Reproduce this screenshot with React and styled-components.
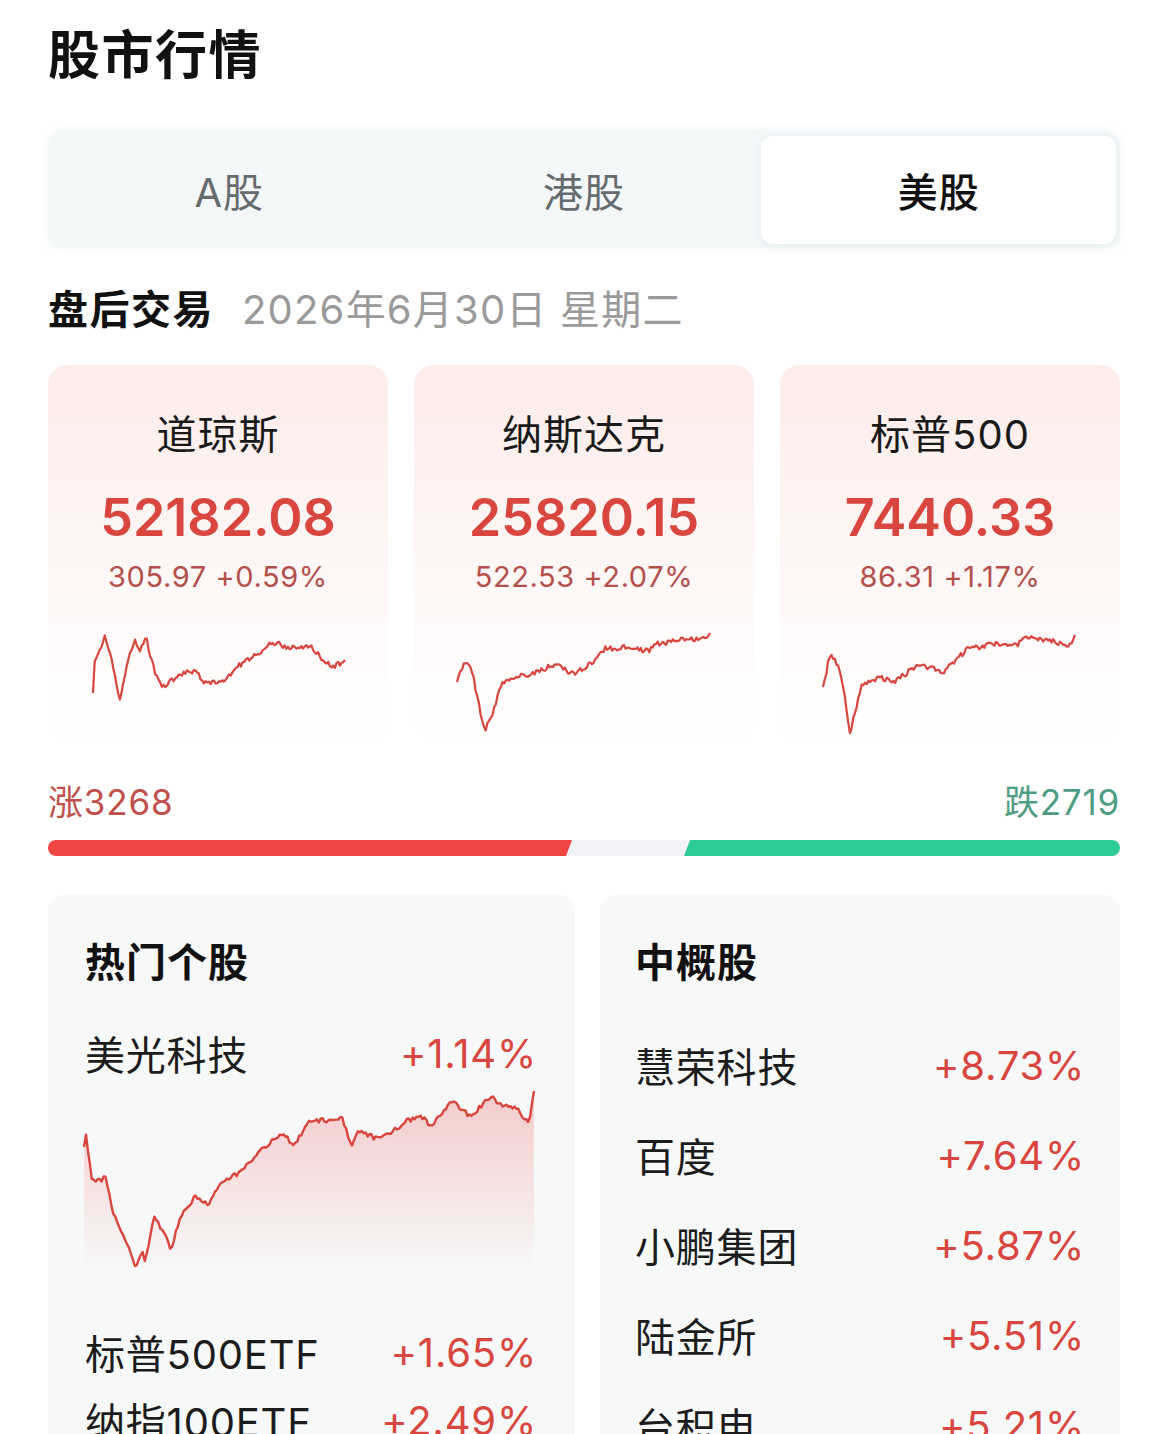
import React from "react";
import styled, { createGlobalStyle } from "styled-components";

const GlobalStyle = createGlobalStyle`
  html, body {
    margin: 0;
    padding: 0;
    background: #ffffff;
    overflow: hidden;
  }
  body {
    font-family: "Inter", "Noto Sans CJK SC", sans-serif;
    color: #111;
  }
`;

const UP = "#d9453f";
const DOWN = "#4f9c84";

const Page = styled.div`
  width: 1072px;
  height: 1434px;
  padding: 26px 50px 0 48px;
  box-sizing: content-box;
  overflow: hidden;
`;

const Title = styled.h1`
  margin: 0;
  font-size: 52px;
  line-height: 60px;
  font-weight: 700;
  letter-spacing: 1.5px;
  color: #111;
`;

const Tabs = styled.div`
  margin-top: 44px;
  height: 118px;
  box-sizing: border-box;
  padding: 6px 4px 4px;
  border-radius: 16px;
  background: #f3f7f8;
  box-shadow: 0 0 8px rgba(230, 236, 240, 0.6);
  display: grid;
  grid-template-columns: repeat(3, 1fr);
`;

const Tab = styled.div`
  display: flex;
  align-items: center;
  justify-content: center;
  border-radius: 12px;
  font-size: 40px;
  letter-spacing: 1px;
  font-weight: ${(p) => (p.$active ? 500 : 400)};
  color: ${(p) => (p.$active ? "#111" : "#666b6d")};
  background: ${(p) => (p.$active ? "#ffffff" : "transparent")};
  box-shadow: ${(p) => (p.$active ? "0 1px 6px rgba(225, 231, 235, 0.7)" : "none")};
`;

const SessionRow = styled.div`
  margin-top: 38px;
  display: flex;
  align-items: baseline;
  gap: 28px;
  line-height: 48px;
`;

const SessionName = styled.span`
  font-size: 40px;
  font-weight: 700;
  letter-spacing: 1.5px;
  color: #111;
`;

const SessionDate = styled.span`
  font-size: 40px;
  letter-spacing: 1.2px;
  color: #9a9a9a;
`;

const CardGrid = styled.div`
  margin-top: 31px;
  display: grid;
  grid-template-columns: repeat(3, 1fr);
  gap: 26px;
`;

const IndexCard = styled.div`
  height: 375px;
  box-sizing: border-box;
  padding-top: 46px;
  border-radius: 20px;
  background: linear-gradient(180deg, #fdecea 0%, #fef4f2 40%, #fffafa 70%, #ffffff 100%);
  display: flex;
  flex-direction: column;
  align-items: center;
`;

const IndexName = styled.div`
  font-size: 40px;
  line-height: 48px;
  letter-spacing: 1px;
  color: #1a1a1a;
`;

const IndexValue = styled.div`
  margin-top: 29px;
  font-size: 52px;
  line-height: 60px;
  font-weight: 600;
  color: ${UP};
`;

const IndexChange = styled.div`
  margin-top: 11px;
  font-size: 29px;
  line-height: 36px;
  color: #b4504c;
  letter-spacing: 0.6px;
`;

const CardChart = styled.svg`
  margin-top: 30px;
  width: 256px;
  height: 112px;
  display: block;
  overflow: visible;
`;

const BreadthLabels = styled.div`
  margin-top: 42px;
  display: flex;
  justify-content: space-between;
  font-size: 35px;
  line-height: 40px;
  letter-spacing: 0.8px;
`;

const BreadthLabel = styled.span`
  color: ${(p) => p.$color};
`;

const BreadthBar = styled.div`
  margin-top: 18px;
  height: 16px;
  display: flex;
`;

const UpSegment = styled.div`
  height: 100%;
  background: #f04543;
  border-radius: 8px 0 0 8px;
  clip-path: polygon(0 0, 100% 0, calc(100% - 6px) 100%, 0 100%);
`;

const FlatSegment = styled.div`
  flex: 1;
  margin: 0 -6px;
  height: 100%;
  background: #f1f3f6;
`;

const DownSegment = styled.div`
  height: 100%;
  background: #2fcb96;
  border-radius: 0 8px 8px 0;
  clip-path: polygon(6px 0, 100% 0, 100% 100%, 0 100%);
`;

const Panels = styled.div`
  margin-top: 39px;
  display: grid;
  grid-template-columns: 527px 1fr;
  gap: 25px;
`;

const Panel = styled.div`
  height: 560px;
  box-sizing: border-box;
  padding: 44px ${(p) => p.$right}px 0 ${(p) => p.$left}px;
  border-radius: 16px;
  background: #f7f9f9;
  display: flex;
  flex-direction: column;
`;

const PanelTitle = styled.div`
  font-size: 40px;
  line-height: 48px;
  font-weight: 700;
  letter-spacing: 1px;
  color: #111;
  margin-bottom: ${(p) => p.$gap}px;
`;

const StockRow = styled.div`
  display: flex;
  justify-content: space-between;
  align-items: center;
  height: 50px;
  font-size: 40px;
  letter-spacing: 0.8px;
  margin-bottom: ${(p) => p.$gap || 0}px;
`;

const StockName = styled.span`
  color: #1c1c1c;
`;

const StockPct = styled.span`
  color: ${UP};
`;

const HotChart = styled.svg`
  margin: 7px 0 52px -2px;
  width: 455px;
  height: 190px;
  display: block;
  overflow: visible;
`;

// Deterministic pseudo-random generator so the tick wiggles stay fixed.
function rng(seed) {
  let a = seed >>> 0;
  return () => {
    a = (a + 0x6d2b79f5) >>> 0;
    let t = a;
    t = Math.imul(t ^ (t >>> 15), t | 1);
    t ^= t + Math.imul(t ^ (t >>> 7), t | 61);
    return ((t ^ (t >>> 14)) >>> 0) / 4294967296;
  };
}

// Interpolate a trend through key points and add intraday jitter.
function tickSeries(keys, count, jitter, seed) {
  const rand = rng(seed);
  const x0 = keys[0][0];
  const x1 = keys[keys.length - 1][0];
  const pts = [];
  let k = 0;
  for (let i = 0; i <= count; i++) {
    const x = x0 + ((x1 - x0) * i) / count;
    while (k < keys.length - 2 && x > keys[k + 1][0]) k++;
    const [ax, ay] = keys[k];
    const [bx, by] = keys[k + 1];
    const t = bx === ax ? 0 : (x - ax) / (bx - ax);
    let y = ay + (by - ay) * t;
    if (i > 0 && i < count) y += (rand() - 0.5) * 2 * jitter;
    pts.push([x, y]);
  }
  return pts;
}

const toLine = (pts) =>
  pts.map(([x, y], i) => `${i ? "L" : "M"}${x.toFixed(1)} ${y.toFixed(1)}`).join(" ");

const DOW = [
  [3, 68], [4, 38], [15, 12], [22, 35], [30, 77], [38, 35], [45, 15], [50, 25],
  [56, 13], [65, 48], [73, 62], [90, 50], [105, 45], [113, 57], [130, 58],
  [150, 40], [163, 32], [183, 17], [200, 23], [222, 22], [230, 32], [242, 43], [255, 35],
];
const NASDAQ = [
  [1, 57], [8, 39], [15, 40], [20, 67], [29, 106], [38, 84], [45, 60], [55, 52],
  [74, 49], [99, 40], [118, 49], [138, 37], [148, 24], [172, 22], [192, 26],
  [202, 19], [226, 15], [251, 13], [254, 8],
];
const SPX = [
  [1, 62], [8, 30], [16, 39], [21, 60], [28, 107], [40, 60], [57, 52], [72, 57],
  [97, 39], [121, 47], [146, 24], [170, 19], [195, 20], [204, 13], [234, 17],
  [249, 20], [253, 10],
];
const MICRON = [
  [1, 62], [3, 50], [9, 97], [23, 93], [30, 128], [41, 152], [53, 183], [59, 164],
  [62, 176], [71, 133], [80, 145], [88, 164], [98, 131], [112, 112], [126, 119],
  [139, 97], [159, 86], [175, 69], [198, 48], [212, 60], [226, 36], [259, 34],
  [269, 62], [276, 45], [291, 53], [312, 45], [323, 36], [339, 32], [348, 41],
  [369, 15], [387, 32], [407, 12], [419, 19], [434, 24], [446, 39], [451, 6],
];

const indices = [
  { name: "道琼斯", value: "52182.08", change: "305.97 +0.59%", keys: DOW, seed: 11 },
  { name: "纳斯达克", value: "25820.15", change: "522.53 +2.07%", keys: NASDAQ, seed: 23 },
  { name: "标普500", value: "7440.33", change: "86.31 +1.17%", keys: SPX, seed: 37 },
];

const chinaStocks = [
  { name: "慧荣科技", pct: "+8.73%" },
  { name: "百度", pct: "+7.64%" },
  { name: "小鹏集团", pct: "+5.87%" },
  { name: "陆金所", pct: "+5.51%" },
  { name: "台积电", pct: "+5.21%" },
];

function Sparkline({ keys, seed }) {
  const pts = tickSeries(keys, 150, 2.6, seed);
  return (
    <CardChart viewBox="0 0 256 112">
      <path d={toLine(pts)} fill="none" stroke={UP} strokeWidth="2.2" strokeLinejoin="round" />
    </CardChart>
  );
}

function AreaChart({ keys, seed }) {
  const pts = tickSeries(keys, 230, 2.4, seed);
  const line = toLine(pts);
  const last = pts[pts.length - 1][0];
  const first = pts[0][0];
  return (
    <HotChart viewBox="0 0 455 190">
      <defs>
        <linearGradient id="hotFill" x1="0" y1="0" x2="0" y2="1">
          <stop offset="0%" stopColor="#ec6a66" stopOpacity="0.32" />
          <stop offset="100%" stopColor="#ec6a66" stopOpacity="0" />
        </linearGradient>
      </defs>
      <path d={`${line} L${last} 190 L${first} 190 Z`} fill="url(#hotFill)" />
      <path d={line} fill="none" stroke={UP} strokeWidth="2.4" strokeLinejoin="round" />
    </HotChart>
  );
}

export default function App() {
  const ups = 3268;
  const downs = 2719;
  const barSpan = 960;
  const upWidth = Math.round((barSpan * ups) / (ups + downs));
  const downWidth = barSpan - upWidth;

  return (
    <>
      <GlobalStyle />
      <Page>
        <Title>股市行情</Title>

        <Tabs>
          <Tab>A股</Tab>
          <Tab>港股</Tab>
          <Tab $active>美股</Tab>
        </Tabs>

        <SessionRow>
          <SessionName>盘后交易</SessionName>
          <SessionDate>2026年6月30日 星期二</SessionDate>
        </SessionRow>

        <CardGrid>
          {indices.map((it) => (
            <IndexCard key={it.name}>
              <IndexName>{it.name}</IndexName>
              <IndexValue>{it.value}</IndexValue>
              <IndexChange>{it.change}</IndexChange>
              <Sparkline keys={it.keys} seed={it.seed} />
            </IndexCard>
          ))}
        </CardGrid>

        <BreadthLabels>
          <BreadthLabel $color="#c0504b">涨{ups}</BreadthLabel>
          <BreadthLabel $color={DOWN}>跌{downs}</BreadthLabel>
        </BreadthLabels>
        <BreadthBar>
          <UpSegment style={{ width: upWidth }} />
          <FlatSegment />
          <DownSegment style={{ width: downWidth }} />
        </BreadthBar>

        <Panels>
          <Panel $left={37} $right={38}>
            <PanelTitle $gap={41}>热门个股</PanelTitle>
            <StockRow>
              <StockName>美光科技</StockName>
              <StockPct>+1.14%</StockPct>
            </StockRow>
            <AreaChart keys={MICRON} seed={59} />
            <StockRow $gap={18}>
              <StockName>标普500ETF</StockName>
              <StockPct>+1.65%</StockPct>
            </StockRow>
            <StockRow>
              <StockName>纳指100ETF</StockName>
              <StockPct>+2.49%</StockPct>
            </StockRow>
          </Panel>

          <Panel $left={35} $right={35}>
            <PanelTitle $gap={53}>中概股</PanelTitle>
            {chinaStocks.map((s) => (
              <StockRow key={s.name} $gap={40}>
                <StockName>{s.name}</StockName>
                <StockPct>{s.pct}</StockPct>
              </StockRow>
            ))}
          </Panel>
        </Panels>
      </Page>
    </>
  );
}
